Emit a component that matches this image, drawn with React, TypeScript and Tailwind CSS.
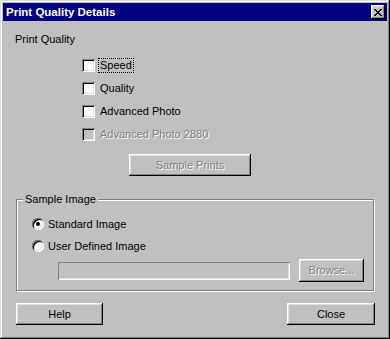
const raised =
  "shadow-[inset_-1px_-1px_0_#000,inset_1px_1px_0_#fff,inset_-2px_-2px_0_#808080,inset_2px_2px_0_#dfdfdf]";
const sunken =
  "shadow-[inset_1px_1px_0_#808080,inset_-1px_-1px_0_#fff,inset_2px_2px_0_#000,inset_-2px_-2px_0_#dfdfdf]";
const disabledText = "text-[#808080] [text-shadow:1px_1px_0_#fff]";

function Checkbox({
  label,
  disabled,
  focused,
}: {
  label: string;
  disabled?: boolean;
  focused?: boolean;
}) {
  return (
    <div className="flex h-[13px] items-center">
      <div
        className={`h-[13px] w-[13px] shrink-0 ${sunken} ${
          disabled ? "bg-[#c0c0c0]" : "bg-white"
        }`}
      />
      <span
        className={`ml-[4px] h-[13px] px-px leading-[13px] ${
          focused ? "outline-1 outline-dotted outline-black" : ""
        } ${disabled ? disabledText : "text-black"}`}
      >
        {label}
      </span>
    </div>
  );
}

function Radio({ label, checked }: { label: string; checked?: boolean }) {
  return (
    <div className="flex h-[12px] items-center">
      <div
        className={`flex h-[12px] w-[12px] shrink-0 items-center justify-center rounded-full bg-white ${sunken}`}
      >
        {checked && <div className="h-[4px] w-[4px] rounded-full bg-black" />}
      </div>
      <span className="ml-[4px] leading-[13px] text-black">{label}</span>
    </div>
  );
}

function Button({
  children,
  className,
  disabled,
}: {
  children: string;
  className: string;
  disabled?: boolean;
}) {
  return (
    <div
      className={`flex items-center justify-center bg-[#c0c0c0] leading-[13px] ${raised} ${className} ${
        disabled ? disabledText : "text-black"
      }`}
    >
      {children}
    </div>
  );
}

export default function App() {
  return (
    <div
      className={`flex h-[339px] w-[390px] flex-col bg-[#c0c0c0] p-[3px] text-[11px] shadow-[inset_-1px_-1px_0_#000,inset_1px_1px_0_#dfdfdf,inset_-2px_-2px_0_#808080,inset_2px_2px_0_#fff]`}
      style={{ fontFamily: '"Liberation Sans", Arial, sans-serif' }}
    >
      {/* title bar */}
      <div className="flex h-[18px] items-center justify-between bg-[#000080] pl-[3px] pr-[2px]">
        <span className="text-[11.5px] font-bold leading-[13px] text-white">
          Print Quality Details
        </span>
        <div className={`flex h-[14px] w-[14px] items-center justify-center bg-[#c0c0c0] ${raised}`}>
          <svg width="8" height="7" viewBox="0 0 8 7" shapeRendering="crispEdges">
            <path
              d="M0 0h2v1h1v1h2V1h1V0h2v1H7v1H6v1H5v1h1v1h1v1h1v1H6V6H5V5H3v1H2v1H0V6h1V5h1V4h1V3H2V2H1V1H0z"
              fill="#000"
            />
          </svg>
        </div>
      </div>

      <div className="flex flex-col px-[12px]">
        <div className="mt-[12px] h-[13px] leading-[13px]">Print Quality</div>

        <div className="ml-[67px] mt-[13px] flex flex-col gap-[10px]">
          <Checkbox label="Speed" focused />
          <Checkbox label="Quality" />
          <Checkbox label="Advanced Photo" />
          <Checkbox label="Advanced Photo 2880" disabled />
        </div>

        <Button className="ml-[114px] mt-[13px] h-[22px] w-[122px]" disabled>
          Sample Prints
        </Button>

        {/* group box */}
        <div className="relative ml-px mt-[23px] h-[92px] w-[358px] border border-[#808080] shadow-[inset_1px_1px_0_#fff,1px_1px_0_#fff]">
          <span className="absolute left-[6px] top-[-7px] bg-[#c0c0c0] px-[2px] leading-[13px]">
            Sample Image
          </span>
          <div className="flex flex-col pl-[15px] pt-[18px]">
            <Radio label="Standard Image" checked />
            <div className="mt-[10px]">
              <Radio label="User Defined Image" />
            </div>
            <div className="mt-[7px] flex h-[23px] items-center">
              <div className="ml-[26px] h-[18px] w-[232px] bg-[#c0c0c0] shadow-[inset_1px_1px_0_#808080,inset_-1px_-1px_0_#fff,inset_2px_2px_0_#c0c0c0,inset_-2px_-2px_0_#dfdfdf]" />
              <Button className="ml-[9px] h-[23px] w-[65px]" disabled>
                Browse...
              </Button>
            </div>
          </div>
        </div>

        <div className="ml-px mt-[12px] flex w-[359px] justify-between">
          <Button className="h-[22px] w-[87px]">Help</Button>
          <Button className="h-[22px] w-[88px]">Close</Button>
        </div>
      </div>
    </div>
  );
}
